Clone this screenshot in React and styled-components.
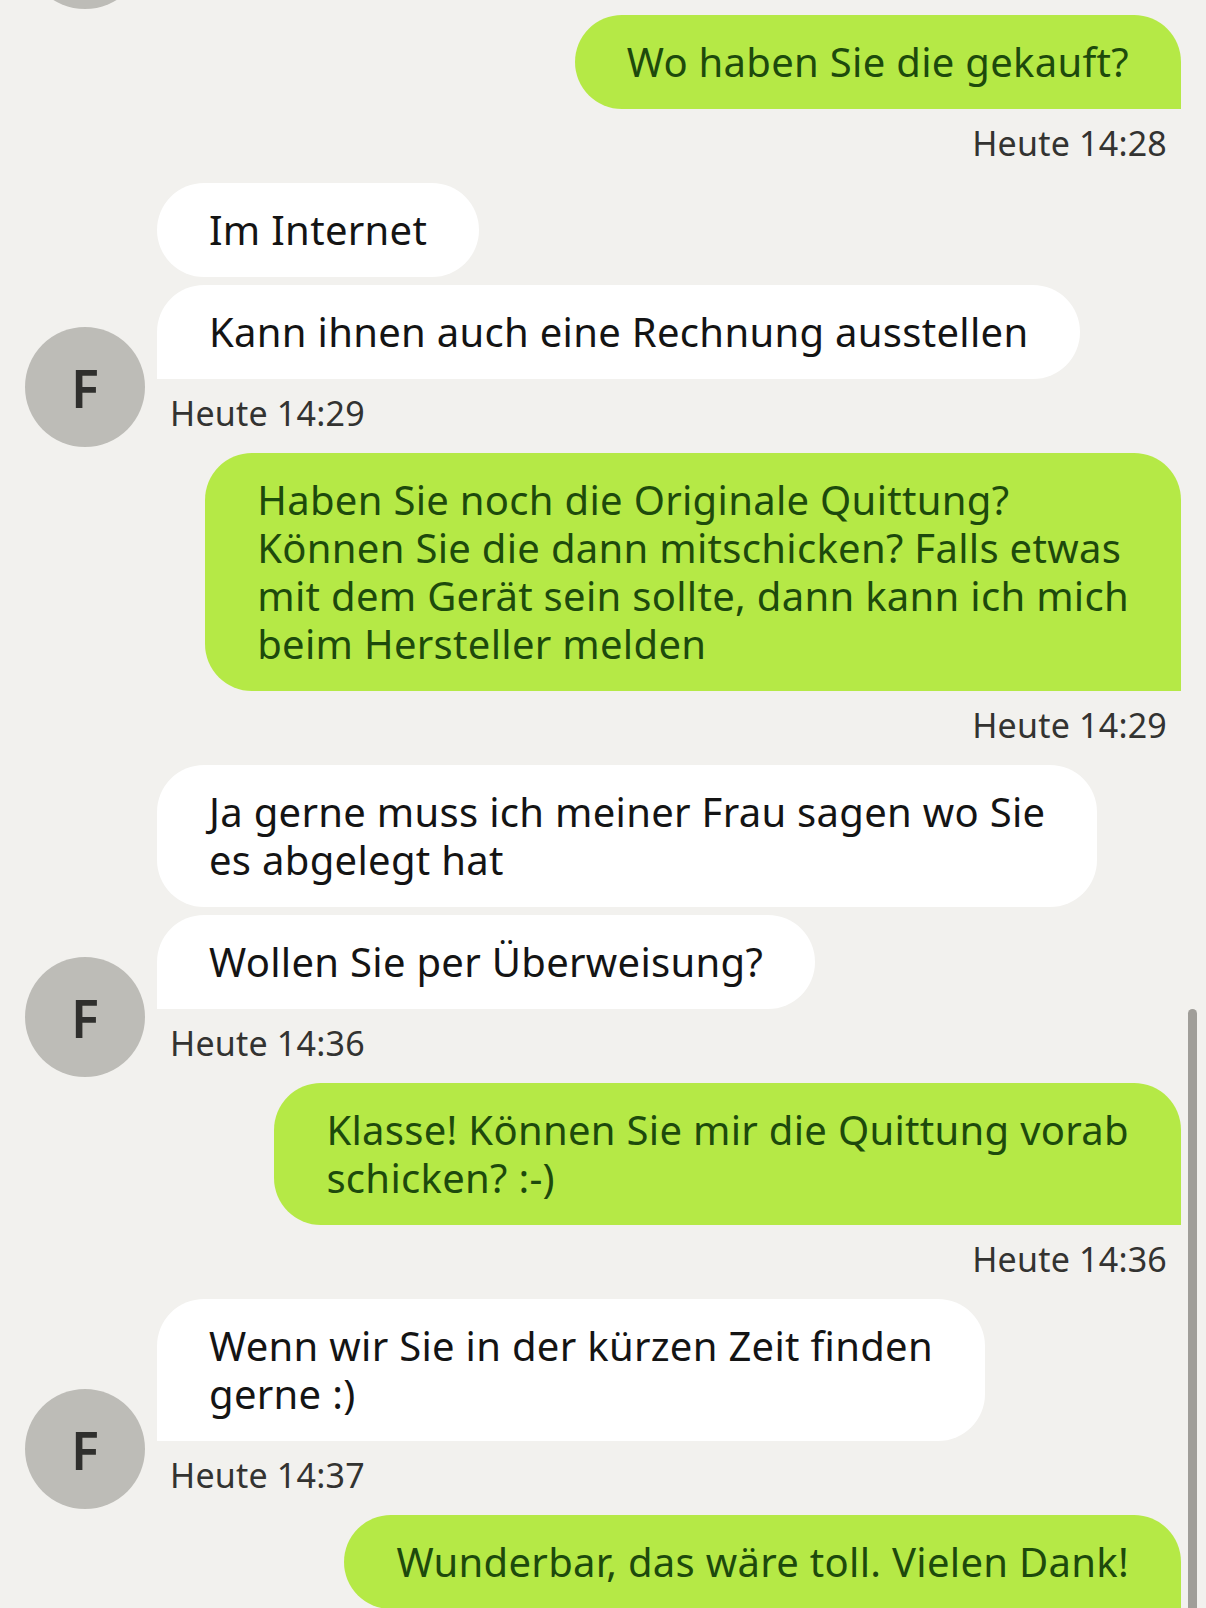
import React from "react";
import styled, { createGlobalStyle } from "styled-components";

const GlobalStyle = createGlobalStyle`
  html, body {
    margin: 0;
    padding: 0;
    background: #f2f1ee;
    overflow: hidden;
  }
  body {
    font-family: "Noto Sans", "Liberation Sans", sans-serif;
  }
`;

const Screen = styled.div`
  width: 1206px;
  height: 1608px;
  overflow: hidden;
  background: #f2f1ee;
  position: relative;
`;

const Thread = styled.div`
  display: flex;
  flex-direction: column;
  padding: 0 25px;
`;

const OutgoingGroup = styled.div`
  display: flex;
  flex-direction: column;
  align-items: flex-end;
  margin-top: ${(p) => (p.$first ? "6px" : "20px")};
`;

const IncomingGroup = styled.div`
  display: flex;
  flex-direction: row;
  align-items: flex-end;
  gap: 12px;
  margin-top: 20px;
`;

const Avatar = styled.div`
  flex: 0 0 auto;
  width: 120px;
  height: 120px;
  border-radius: 50%;
  background: #bdbcb7;
  color: #2f2f2d;
  display: flex;
  align-items: center;
  justify-content: center;
  font-size: 52px;
  font-weight: 600;
  margin-bottom: -14px;
`;

const PrevAvatar = styled(Avatar)`
  margin: -111px 0 0 0;
`;

const Column = styled.div`
  display: flex;
  flex-direction: column;
  align-items: flex-start;
`;

const BubbleStack = styled.div`
  display: flex;
  flex-direction: column;
  align-items: flex-start;
  gap: 8px;
`;

const Bubble = styled.div`
  padding: 23px 52px;
  font-size: 40px;
  letter-spacing: 0.3px;
  line-height: 48px;
  white-space: nowrap;
  background: ${(p) => (p.$out ? "#b5e946" : "#ffffff")};
  color: ${(p) => (p.$out ? "#1d4a0c" : "#141414")};
  border-radius: ${(p) =>
    p.$out ? "47px 47px 0 47px" : p.$tail ? "47px 47px 47px 0" : "47px"};
`;

const Stamp = styled.div`
  font-size: 34px;
  line-height: 40px;
  color: #333331;
  letter-spacing: 0.2px;
  margin-top: 14px;
  padding: ${(p) => (p.$right ? "0 14px 0 0" : "0 0 0 13px")};
`;

const ScrollThumb = styled.div`
  position: absolute;
  right: 9px;
  top: 1009px;
  bottom: 0;
  width: 9px;
  border-radius: 5px 5px 0 0;
  background: #a09e99;
`;

const Lines = ({ lines }) =>
  lines.map((l, i) => (
    <React.Fragment key={i}>
      {i > 0 && <br />}
      {l}
    </React.Fragment>
  ));

const messages = [
  { out: true, texts: [["Wo haben Sie die gekauft?"]], time: "Heute 14:28" },
  {
    out: false,
    texts: [["Im Internet"], ["Kann ihnen auch eine Rechnung ausstellen"]],
    time: "Heute 14:29",
  },
  {
    out: true,
    texts: [
      [
        "Haben Sie noch die Originale Quittung?",
        "Können Sie die dann mitschicken? Falls etwas",
        "mit dem Gerät sein sollte, dann kann ich mich",
        "beim Hersteller melden",
      ],
    ],
    time: "Heute 14:29",
  },
  {
    out: false,
    texts: [
      ["Ja gerne muss ich meiner Frau sagen wo Sie", "es abgelegt hat"],
      ["Wollen Sie per Überweisung?"],
    ],
    time: "Heute 14:36",
  },
  {
    out: true,
    texts: [["Klasse! Können Sie mir die Quittung vorab", "schicken? :-)"]],
    time: "Heute 14:36",
  },
  {
    out: false,
    texts: [["Wenn wir Sie in der kürzen Zeit finden", "gerne :)"]],
    time: "Heute 14:37",
  },
  { out: true, texts: [["Wunderbar, das wäre toll. Vielen Dank!"]] },
];

const App = () => {
  return (
    <Screen>
      <GlobalStyle />
      <Thread>
        <PrevAvatar>F</PrevAvatar>
        {messages.map((m, i) =>
          m.out ? (
            <OutgoingGroup key={i} $first={i === 0}>
              <Bubble $out>
                <Lines lines={m.texts[0]} />
              </Bubble>
              {m.time && <Stamp $right>{m.time}</Stamp>}
            </OutgoingGroup>
          ) : (
            <IncomingGroup key={i}>
              <Avatar>F</Avatar>
              <Column>
                <BubbleStack>
                  {m.texts.map((t, j) => (
                    <Bubble key={j} $tail={j === m.texts.length - 1}>
                      <Lines lines={t} />
                    </Bubble>
                  ))}
                </BubbleStack>
                <Stamp>{m.time}</Stamp>
              </Column>
            </IncomingGroup>
          )
        )}
      </Thread>
      <ScrollThumb />
    </Screen>
  );
};

export default App;
